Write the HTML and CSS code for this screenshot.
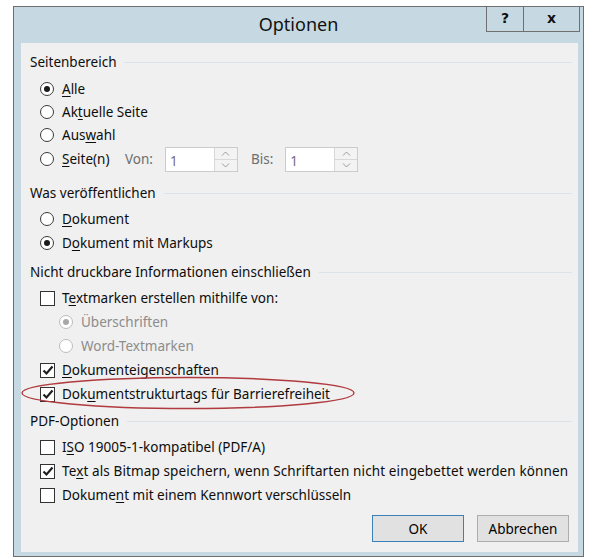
FILE: index.html
```html
<!DOCTYPE html>
<html lang="de">
<head>
<meta charset="utf-8">
<title>Optionen</title>
<link rel="stylesheet" href="styles.css">
</head>
<body>
<div class="window">
  <div class="titlebar">
    <span></span>
    <span class="title">Optionen</span>
    <div class="caption-buttons">
      <span class="cap-btn help">?</span>
      <span class="cap-btn close">x</span>
    </div>
  </div>

  <div class="content">
    <section class="group g-range">
      <div class="group-head"><span>Seitenbereich</span><i></i></div>
      <div class="opt r23"><span class="radio on"></span><span><u>A</u>lle</span></div>
      <div class="opt r23"><span class="radio"></span><span>Ak<u>t</u>uelle Seite</span></div>
      <div class="opt r23"><span class="radio"></span><span>Aus<u>w</u>ahl</span></div>
      <div class="opt r26">
        <span class="radio"></span><span class="pages-label"><u>S</u>eite(n)</span>
        <span class="dim-label von">Von:</span>
        <span class="spin"><span class="spin-val">1</span><span class="spin-btns"><span class="up"><svg width="9" height="5" viewBox="0 0 9 5"><path d="M1 4.5 L4.5 1 L8 4.5" fill="none" stroke="#9a9a9a" stroke-width="1"/></svg></span><span class="down"><svg width="9" height="5" viewBox="0 0 9 5"><path d="M1 0.5 L4.5 4 L8 0.5" fill="none" stroke="#9a9a9a" stroke-width="1"/></svg></span></span></span>
        <span class="dim-label bis">Bis:</span>
        <span class="spin"><span class="spin-val">1</span><span class="spin-btns"><span class="up"><svg width="9" height="5" viewBox="0 0 9 5"><path d="M1 4.5 L4.5 1 L8 4.5" fill="none" stroke="#9a9a9a" stroke-width="1"/></svg></span><span class="down"><svg width="9" height="5" viewBox="0 0 9 5"><path d="M1 0.5 L4.5 4 L8 0.5" fill="none" stroke="#9a9a9a" stroke-width="1"/></svg></span></span></span>
      </div>
    </section>

    <section class="group g-publish">
      <div class="group-head"><span>Was veröffentlichen</span><i></i></div>
      <div class="opt"><span class="radio"></span><span><u>D</u>okument</span></div>
      <div class="opt"><span class="radio on"></span><span>D<u>o</u>kument mit Markups</span></div>
    </section>

    <section class="group g-info">
      <div class="group-head"><span>Nicht druckbare Informationen einschließen</span><i></i></div>
      <div class="opt"><span class="check"></span><span>T<u>e</u>xtmarken erstellen mithilfe von:</span></div>
      <div class="opt sub disabled"><span class="radio on"></span><span>Überschriften</span></div>
      <div class="opt sub disabled"><span class="radio"></span><span>Word-Textmarken</span></div>
      <div class="opt"><span class="check on"><svg width="12" height="11" viewBox="0 0 12 11"><path d="M1.5 5.5 L4.5 8.5 L10.5 1.5" fill="none" stroke="#1e1e1e" stroke-width="2.2"/></svg></span><span><u>D</u>okumenteigenschaften</span></div>
      <div class="opt"><span class="check on"><svg width="12" height="11" viewBox="0 0 12 11"><path d="M1.5 5.5 L4.5 8.5 L10.5 1.5" fill="none" stroke="#1e1e1e" stroke-width="2.2"/></svg></span><span>Dok<u>u</u>mentstrukturtags für Barrierefreiheit</span></div>
    </section>

    <section class="group g-pdf">
      <div class="group-head"><span>PDF-Optionen</span><i></i></div>
      <div class="opt"><span class="check"></span><span>I<u>S</u>O 19005-1-kompatibel (PDF/A)</span></div>
      <div class="opt"><span class="check on"><svg width="12" height="11" viewBox="0 0 12 11"><path d="M1.5 5.5 L4.5 8.5 L10.5 1.5" fill="none" stroke="#1e1e1e" stroke-width="2.2"/></svg></span><span class="loose">Te<u>x</u>t als Bitmap speichern, wenn Schriftarten nicht eingebettet werden können</span></div>
      <div class="opt"><span class="check"></span><span>Dokume<u>n</u>t mit einem Kennwort verschlüsseln</span></div>
    </section>

    <div class="actions">
      <button class="btn default">OK</button>
      <button class="btn">Abbrechen</button>
    </div>
  </div>

  <!-- hand-drawn highlight around the accessibility option -->
  <svg class="mark" width="340" height="36" viewBox="0 0 340 36">
    <ellipse cx="170" cy="18" rx="166" ry="15.5" fill="none" stroke="#b03a3e" stroke-width="1.4"/>
  </svg>
</div>
</body>
</html>
```

FILE: styles.css
```css
html, body {
  margin: 0;
  padding: 0;
  background: #ffffff;
}

body {
  font-family: "Noto Sans", "Open Sans", sans-serif;
  font-size: 13.5px;
  color: #0d0d0d;
}

.window {
  position: relative;
  box-sizing: border-box;
  width: 571px;
  height: 551px;
  margin: 6px 0 0 13px;
  border: 1px solid #6e6e6e;
  background: #c6d9e2;
  display: flex;
  flex-direction: column;
}

/* title bar */
.titlebar {
  height: 36px;
  display: grid;
  grid-template-columns: 1fr auto 1fr;
  align-items: start;
}

.title {
  font-size: 18px;
  line-height: 34px;
  color: #111;
}

.caption-buttons {
  justify-self: end;
  display: flex;
  margin: -1px 3px 0 0;
}

.cap-btn {
  box-sizing: border-box;
  height: 26px;
  border: 1px solid #707070;
  font-family: "DejaVu Sans", sans-serif;
  font-weight: bold;
  font-size: 14px;
  line-height: 22px;
  text-align: center;
  color: #111;
}

.help {
  width: 37px;
  border-right: none;
}

.close {
  width: 57px;
}

/* client area */
.content {
  flex: 1;
  margin: 0 5px 4px 7px;
  background: #f0f0f0;
  padding: 9px 6px 0 9px;
}

.group-head {
  display: flex;
  align-items: center;
  height: 20px;
  line-height: 20px;
  margin-bottom: 4px;
}

.group-head i {
  flex: 1;
  height: 1px;
  background: #dbe2e8;
  margin-left: 8px;
}

.g-range .group-head { margin-bottom: 5px; }
.g-publish { margin-top: 11px; }
.g-info { margin-top: 7px; }
.g-pdf { margin-top: 5px; }

.opt {
  display: flex;
  align-items: center;
  height: 24px;
  padding-left: 10px;
  white-space: nowrap;
}

.opt.r23 { height: 23px; }
.opt.r26 { height: 26px; }

.opt.sub { padding-left: 29px; }
.opt.disabled { color: #8c8c8c; }

.loose { letter-spacing: 0.12px; }

u {
  text-decoration-thickness: 1px;
  text-underline-offset: 2px;
}

/* radio button */
.radio {
  box-sizing: border-box;
  width: 14px;
  height: 14px;
  border: 1px solid #3a3a3a;
  border-radius: 50%;
  background: #fff;
  margin-right: 8px;
  display: flex;
  align-items: center;
  justify-content: center;
}

.radio.on::after {
  content: "";
  width: 6px;
  height: 6px;
  border-radius: 50%;
  background: #1a1a1a;
}

.disabled .radio {
  border-color: #bcbcbc;
}

.disabled .radio.on::after {
  background: #a8a8a8;
}

/* checkbox */
.check {
  box-sizing: border-box;
  width: 15px;
  height: 15px;
  border: 1px solid #333;
  background: #fff;
  margin-right: 7px;
  display: flex;
  align-items: center;
  justify-content: center;
}

/* page range spinners */
.pages-label {
  width: 47px;
}

.dim-label {
  color: #6d6d6d;
}

.von { margin-left: 16px; margin-right: 12px; }
.bis { margin-left: 13px; margin-right: 12px; }

.spin {
  box-sizing: border-box;
  display: flex;
  width: 73px;
  height: 25px;
  border: 1px solid #cccccc;
  background: #fff;
  margin-top: 1px;
}

.spin-val {
  flex: 1;
  color: #7a6d84;
  padding: 4px 0 0 4px;
  line-height: 18px;
}

.spin-btns {
  width: 22px;
  display: flex;
  flex-direction: column;
  border-left: 1px solid #d8d8d8;
}

.spin-btns span {
  flex: 1;
  display: flex;
  align-items: center;
  justify-content: center;
  background: #f3f3f3;
}

.spin-btns .up {
  border-bottom: 1px solid #d8d8d8;
}

/* dialog buttons */
.actions {
  display: flex;
  justify-content: flex-end;
  gap: 13px;
  margin-top: 8px;
  padding-right: 3px;
}

.btn {
  box-sizing: border-box;
  width: 92px;
  height: 27px;
  font-family: inherit;
  font-size: 13.5px;
  color: #000;
  background: #e1e1e1;
  border: 1px solid #adadad;
  padding: 0;
}

.btn.default {
  border-color: #3b80b7;
}

/* annotation drawn over the dialog */
.mark {
  position: absolute;
  left: 4px;
  top: 368px;
}
```
